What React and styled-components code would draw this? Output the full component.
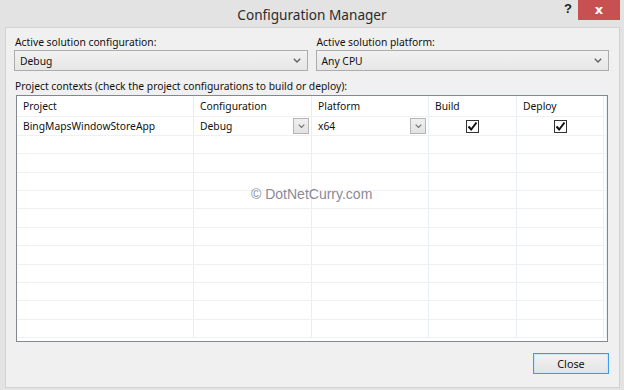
import React from 'react';
import styled, { createGlobalStyle } from 'styled-components';

const GlobalStyle = createGlobalStyle`
  html, body {
    margin: 0;
    padding: 0;
    background: #e3e3e3;
  }
  * { box-sizing: border-box; }
`;

const columns = [
  { key: 'project', title: 'Project', width: 177 },
  { key: 'config', title: 'Configuration', width: 118 },
  { key: 'platform', title: 'Platform', width: 117 },
  { key: 'build', title: 'Build', width: 88 },
  { key: 'deploy', title: 'Deploy', width: 87 },
];

const rows = [
  { project: 'BingMapsWindowStoreApp', config: 'Debug', platform: 'x64', build: true, deploy: true },
];

const EMPTY_ROWS = 11;

const Chevron = ({ size = 8, color = '#606060' }) => (
  <svg width={size} height={size * 0.6} viewBox="0 0 10 6">
    <path d="M1 1 L5 5 L9 1" fill="none" stroke={color} strokeWidth="1.7" />
  </svg>
);

const Check = () => (
  <svg width="11" height="11" viewBox="0 0 11 11">
    <path d="M1.5 5.5 L4.2 8.5 L9.5 1.5" fill="none" stroke="#111" strokeWidth="2" />
  </svg>
);

const App = () => (
  <>
    <GlobalStyle />
    <Window>
      <TitleBar>
        <Title>Configuration Manager</Title>
        <Help>?</Help>
        <CloseX>x</CloseX>
      </TitleBar>
      <Client>
        <TopRow>
          <Field>
            <Label>Active solution configuration:</Label>
            <Select>
              <span>Debug</span>
              <Chevron />
            </Select>
          </Field>
          <Field>
            <Label>Active solution platform:</Label>
            <Select>
              <span>Any CPU</span>
              <Chevron />
            </Select>
          </Field>
        </TopRow>
        <Label>Project contexts (check the project configurations to build or deploy):</Label>
        <Grid>
          <HeaderRow>
            {columns.map((c) => (
              <HeadCell key={c.key} $w={c.width}>{c.title}</HeadCell>
            ))}
            <Filler />
          </HeaderRow>
          {rows.map((r) => (
            <Row key={r.project} $first>
              <Cell $w={177}>{r.project}</Cell>
              <Cell $w={118}>
                <span>{r.config}</span>
                <CellDrop><Chevron size={7} color="#777" /></CellDrop>
              </Cell>
              <Cell $w={117}>
                <span>{r.platform}</span>
                <CellDrop><Chevron size={7} color="#777" /></CellDrop>
              </Cell>
              <Cell $w={88} $center>
                <CheckBox>{r.build && <Check />}</CheckBox>
              </Cell>
              <Cell $w={87} $center>
                <CheckBox>{r.deploy && <Check />}</CheckBox>
              </Cell>
              <Filler />
            </Row>
          ))}
          {Array.from({ length: EMPTY_ROWS }).map((_, i) => (
            <Row key={i}>
              {columns.map((c) => (
                <Cell key={c.key} $w={c.width} />
              ))}
              <Filler />
            </Row>
          ))}
          <Watermark>© DotNetCurry.com</Watermark>
        </Grid>
        <Footer>
          <Button>Close</Button>
        </Footer>
      </Client>
    </Window>
  </>
);

const Window = styled.div`
  width: 624px;
  height: 390px;
  display: flex;
  flex-direction: column;
  background: #e3e3e3;
  font-family: "Segoe UI", "Noto Sans", "Open Sans", sans-serif;
  color: #111;
  overflow: hidden;
`;

const TitleBar = styled.div`
  position: relative;
  height: 27px;
  flex: none;
  display: flex;
  align-items: center;
  justify-content: center;
`;

const Title = styled.div`
  font-size: 13.6px;
  color: #2b2b2b;
  padding-top: 2px;
`;

const Help = styled.div`
  position: absolute;
  right: 52px;
  top: 1px;
  font-size: 13px;
  font-weight: bold;
  color: #222;
  font-family: "Liberation Sans", sans-serif;
`;

const CloseX = styled.div`
  position: absolute;
  right: 4px;
  top: 0;
  width: 42px;
  height: 20px;
  background: #c75050;
  color: #fff;
  font-size: 13px;
  font-weight: bold;
  font-family: "DejaVu Sans", sans-serif;
  display: flex;
  align-items: center;
  justify-content: center;
  line-height: 1;
  padding-bottom: 2px;
`;

const Client = styled.div`
  flex: 1;
  margin: 0 4px 2px 5px;
  background: #f0f0f0;
  border: 1px solid #d2d2d2;
  padding: 7px 10px 0 8px;
  display: flex;
  flex-direction: column;
`;

const TopRow = styled.div`
  display: flex;
  gap: 8px;
  margin-bottom: 8px;
`;

const Field = styled.div`
  flex: 1;
  display: flex;
  flex-direction: column;
`;

const Label = styled.div`
  font-size: 10.3px;
  line-height: 15px;
  padding-left: 1px;
`;

const Select = styled.div`
  height: 21px;
  border: 1px solid #acacac;
  background: linear-gradient(#f2f2f2, #e6e6e6);
  display: flex;
  align-items: center;
  justify-content: space-between;
  padding: 0 6px 0 5px;
  font-size: 10.3px;
`;

const Grid = styled.div`
  position: relative;
  margin: 1px 0 0 2px;
  width: 592px;
  height: 247px;
  border: 1px solid #828790;
  background: #fff;
  overflow: hidden;
`;

const HeaderRow = styled.div`
  display: flex;
  height: 21px;
  border-bottom: 1px solid #f0f0f0;
`;

const HeadCell = styled.div`
  width: ${(p) => p.$w}px;
  flex: none;
  border-right: 1px solid #e8eef5;
  padding: 0 0 0 6px;
  display: flex;
  align-items: center;
  font-size: 10.3px;
`;

const Row = styled.div`
  display: flex;
  height: ${(p) => (p.$first ? 19 : 18.36)}px;
  border-bottom: 1px solid #f0f0f0;
`;

const Cell = styled.div`
  width: ${(p) => p.$w}px;
  flex: none;
  border-right: 1px solid #e8eef5;
  display: flex;
  align-items: center;
  justify-content: ${(p) => (p.$center ? 'center' : 'space-between')};
  padding: 0 ${(p) => (p.$center ? 0 : 2)}px 0 ${(p) => (p.$center ? 0 : 6)}px;
  font-size: 10.3px;
`;

const Filler = styled.div`
  flex: 1;
  border-right: 1px solid #e8eef5;
`;

const CellDrop = styled.div`
  width: 16px;
  height: 16px;
  border: 1px solid #b4b4b4;
  background: linear-gradient(#f0f0f0, #e2e2e2);
  display: flex;
  align-items: center;
  justify-content: center;
`;

const CheckBox = styled.div`
  width: 13px;
  height: 13px;
  border: 1px solid #333;
  background: #fff;
  display: flex;
  align-items: center;
  justify-content: center;
`;

const Watermark = styled.div`
  position: absolute;
  left: 234px;
  top: 90px;
  font-family: "Liberation Sans", Arial, sans-serif;
  font-size: 14px;
  color: #8a8a98;
`;

const Footer = styled.div`
  display: flex;
  justify-content: flex-end;
  padding: 11px 0 0;
`;

const Button = styled.button`
  width: 76px;
  height: 21px;
  border: 1px solid #3c9bf0;
  background: linear-gradient(#f2f2f2, #e4e4e4);
  font-family: "Segoe UI", "Noto Sans", sans-serif;
  font-size: 10.8px;
  color: #111;
  padding: 0;
  box-shadow: inset 0 0 0 1px #cde6fb;
`;

export default App;
